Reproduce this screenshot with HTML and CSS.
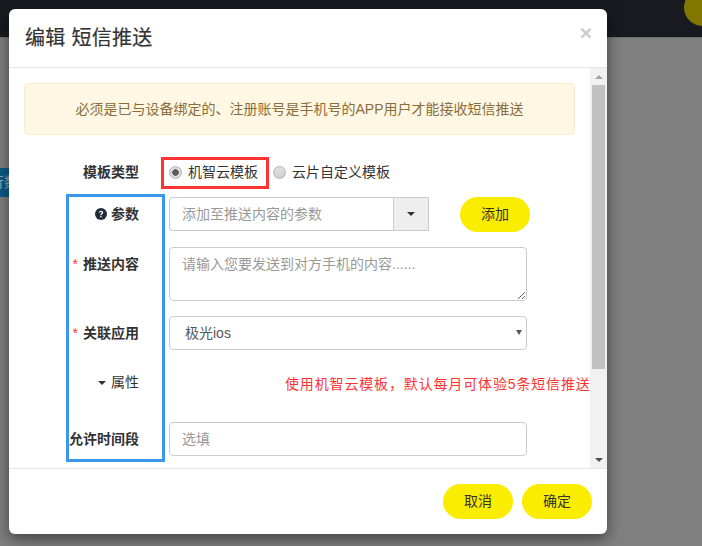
FILE: index.html
```html
<!DOCTYPE html>
<html lang="zh-CN">
<head>
<meta charset="utf-8">
<title>编辑 短信推送</title>
<link rel="stylesheet" href="styles.css">
</head>
<body>
<header class="topbar"><span class="avatar"></span></header>
<div class="side-chip">行数</div>
<div class="modal">
  <div class="modal-header">
    <h4 class="modal-title">编辑 短信推送</h4>
    <span class="close">×</span>
  </div>
  <div class="modal-middle">
    <div class="modal-body">
      <div class="alert">必须是已与设备绑定的、注册账号是手机号的APP用户才能接收短信推送</div>
      <div class="form">
        <div class="row row-type">
          <span class="label">模板类型</span>
          <div class="radios">
            <label class="radio-item first"><input type="radio" name="tpl" checked>机智云模板</label>
            <label class="radio-item"><input type="radio" name="tpl">云片自定义模板</label>
          </div>
        </div>
        <div class="row row-param">
          <span class="label"><svg class="help" viewBox="0 0 12 12" width="12" height="12"><circle cx="6" cy="6" r="6" fill="#222d3a"/><path d="M3.9 4.6C4 3.4 4.9 2.7 6.1 2.7c1.200 0 2.100.7 2.100 1.800 0 1.600-1.700 1.500-1.700 2.700H5.300c0-1.800 1.500-1.800 1.500-2.700 0-.4-.3-.7-.8-.7-.5 0-.8.3-.9.8z" fill="#fff"/><rect x="5.300" y="7.900" width="1.300" height="1.400" fill="#fff"/></svg>参数</span>
          <div class="input-group">
            <input class="control group-input" type="text" placeholder="添加至推送内容的参数">
            <span class="addon"><i class="caret"></i></span>
          </div>
          <button class="pill add-btn" type="button">添加</button>
        </div>
        <div class="row row-content">
          <span class="label"><em class="req">*</em>推送内容</span>
          <textarea class="control area" placeholder="请输入您要发送到对方手机的内容......"></textarea>
        </div>
        <div class="row row-app">
          <span class="label"><em class="req">*</em>关联应用</span>
          <div class="select-wrap">
            <select class="control picker"><option>极光ios</option></select>
          </div>
        </div>
        <div class="row row-attr">
          <span class="label normal"><i class="caret attr-caret"></i>属性</span>
          <p class="notice">使用机智云模板，默认每月可体验5条短信推送</p>
        </div>
        <div class="row row-time">
          <span class="label">允许时间段</span>
          <input class="control wide" type="text" placeholder="选填">
        </div>
      </div>
      <div class="mark mark-red"></div>
      <div class="mark mark-blue"></div>
    </div>
    <div class="scrollbar">
      <span class="arrow up"></span>
      <span class="thumb"></span>
      <span class="arrow down"></span>
    </div>
  </div>
  <div class="modal-footer">
    <button class="pill" type="button">取消</button>
    <button class="pill" type="button">确定</button>
  </div>
</div>
</body>
</html>
```
FILE: styles.css
```css
* { box-sizing: border-box; }
html, body { height: 100%; }
body {
  margin: 0;
  background: #808080;
  overflow: hidden;
  font-family: "Liberation Sans", "Noto Sans CJK SC", sans-serif;
  font-size: 14px;
  color: #333;
  position: relative;
}
.topbar {
  height: 38px;
  background: #171b1f;
  border-bottom: 1px solid #6f6f6f;
  position: relative;
  overflow: hidden;
}
.avatar {
  position: absolute;
  left: 684px;
  top: -11px;
  width: 37px;
  height: 37px;
  border-radius: 50%;
  background: #807600;
}
.side-chip {
  position: absolute;
  left: -10px;
  top: 168px;
  width: 34px;
  height: 29px;
  background: #0c5a86;
  color: #8fa9bb;
  font-size: 14px;
  line-height: 29px;
  white-space: nowrap;
}
.modal {
  position: absolute;
  left: 9px;
  top: 9px;
  width: 598px;
  height: 525px;
  background: #fff;
  border-radius: 6px;
  box-shadow: 0 5px 15px rgba(0, 0, 0, .5);
  display: flex;
  flex-direction: column;
  overflow: hidden;
}
.modal-header {
  height: 59px;
  flex: none;
  border-bottom: 1px solid #e5e5e5;
  display: flex;
  justify-content: space-between;
  padding: 15px 15px 0 16px;
}
.modal-title {
  margin: 0;
  font-size: 20px;
  font-weight: 400;
  line-height: 28px;
  letter-spacing: .3px;
  color: #333;
  -webkit-text-stroke: .2px #333;
}
.close {
  font-size: 21px;
  font-weight: 700;
  line-height: 18px;
  color: #ccc;
}
.modal-middle {
  flex: 1;
  min-height: 0;
  display: flex;
}
.modal-body {
  flex: 1;
  min-width: 0;
  position: relative;
  padding: 15px;
  overflow: hidden;
}
.alert {
  height: 52px;
  background: #fdf7e3;
  border: 1px solid #faebcc;
  border-radius: 4px;
  color: #8a6d3b;
  text-align: center;
  line-height: 50px;
}
.form { padding-top: 20px; }
.row {
  display: flex;
  align-items: flex-start;
}
.label {
  flex: none;
  width: 115px;
  margin-right: 30px;
  text-align: right;
  font-weight: 700;
  color: #333;
  line-height: 34px;
  white-space: nowrap;
}
.label.normal { font-weight: 400; }
.req {
  font-style: normal;
  font-weight: 400;
  color: #f33;
  margin-right: 5px;
}
.help { vertical-align: -1px; margin-right: 4px; }
.radios { display: flex; align-items: center; height: 34px; }
.radio-item {
  display: flex;
  align-items: center;
  line-height: 20px;
  color: #333;
}
.radio-item.first { margin-right: 15px; }
.radio-item input {
  appearance: none;
  margin: 0 6px 0 0;
  width: 13px;
  height: 13px;
  border-radius: 50%;
  border: 1px solid #b4b4b4;
  background: linear-gradient(#e0e0e0, #d0d0d0);
}
.radio-item input:checked {
  background: radial-gradient(circle, #5c5c5c 0 3px, #dcdcdc 3.500px);
}
.row-type { height: 34px; }
.row-param { margin-top: 8px; height: 35px; }
.row-content { margin-top: 15px; }
.row-app { margin-top: 15px; }
.row-attr { margin-top: 15px; height: 57px; }
.control {
  display: block;
  height: 34px;
  width: 358px;
  padding: 6px 12px;
  border: 1px solid #ccc;
  border-radius: 4px;
  background: #fff;
  color: #555;
  font: inherit;
  outline: none;
}
.control::placeholder { color: #999; opacity: 1; }
.input-group { display: flex; width: 260px; height: 34px; }
.group-input {
  width: 224px;
  border-radius: 4px 0 0 4px;
  border-right: 0;
}
.addon {
  width: 36px;
  height: 34px;
  background: #eee;
  border: 1px solid #ccc;
  display: flex;
  align-items: center;
  justify-content: center;
}
.caret {
  display: inline-block;
  width: 0;
  height: 0;
  border-top: 4px solid #333;
  border-left: 4px solid transparent;
  border-right: 4px solid transparent;
}
.attr-caret { vertical-align: 2px; margin-right: 5px; }
.add-btn { margin-left: 31px; }
.pill {
  width: 70px;
  height: 35px;
  border: 0;
  border-radius: 17.500px;
  background: #fbed00;
  color: #333;
  font: inherit;
  padding: 0 0 3px;
}
.area { height: 54px; resize: vertical; padding-top: 5px; }
.select-wrap { position: relative; }
.select-wrap::after {
  content: "";
  position: absolute;
  right: 5px;
  top: 14px;
  border-top: 5px solid #555;
  border-left: 3px solid transparent;
  border-right: 3px solid transparent;
}
.picker { appearance: none; padding-left: 15px; }
.notice {
  margin: 9px 0 0 116px;
  font-size: 14px;
  letter-spacing: .85px;
  line-height: 20px;
  color: #f33;
  white-space: nowrap;
}
.mark { position: absolute; pointer-events: none; }
.mark-red {
  left: 152px;
  top: 89px;
  width: 108px;
  height: 32px;
  border: 3px solid #f33;
}
.mark-blue {
  left: 57px;
  top: 126px;
  width: 99px;
  height: 268px;
  border: 3px solid #3b97e8;
}
.scrollbar {
  flex: none;
  width: 17px;
  background: #f1f1f1;
  display: flex;
  flex-direction: column;
  align-items: center;
}
.arrow {
  flex: none;
  height: 17px;
  width: 17px;
  display: flex;
}
.arrow::before {
  content: "";
  margin: auto;
  width: 0;
  height: 0;
  border-left: 4px solid transparent;
  border-right: 4px solid transparent;
}
.arrow.up::before { border-bottom: 4px solid #a3a3a3; }
.arrow.down { margin-top: auto; }
.arrow.down::before { border-top: 4px solid #505050; }
.thumb {
  flex: none;
  width: 13px;
  height: 284px;
  background: #c1c1c1;
}
.modal-footer {
  height: 66px;
  flex: none;
  border-top: 1px solid #e5e5e5;
  display: flex;
  justify-content: flex-end;
  gap: 9px;
  padding: 15px 15px 0 0;
}
```
